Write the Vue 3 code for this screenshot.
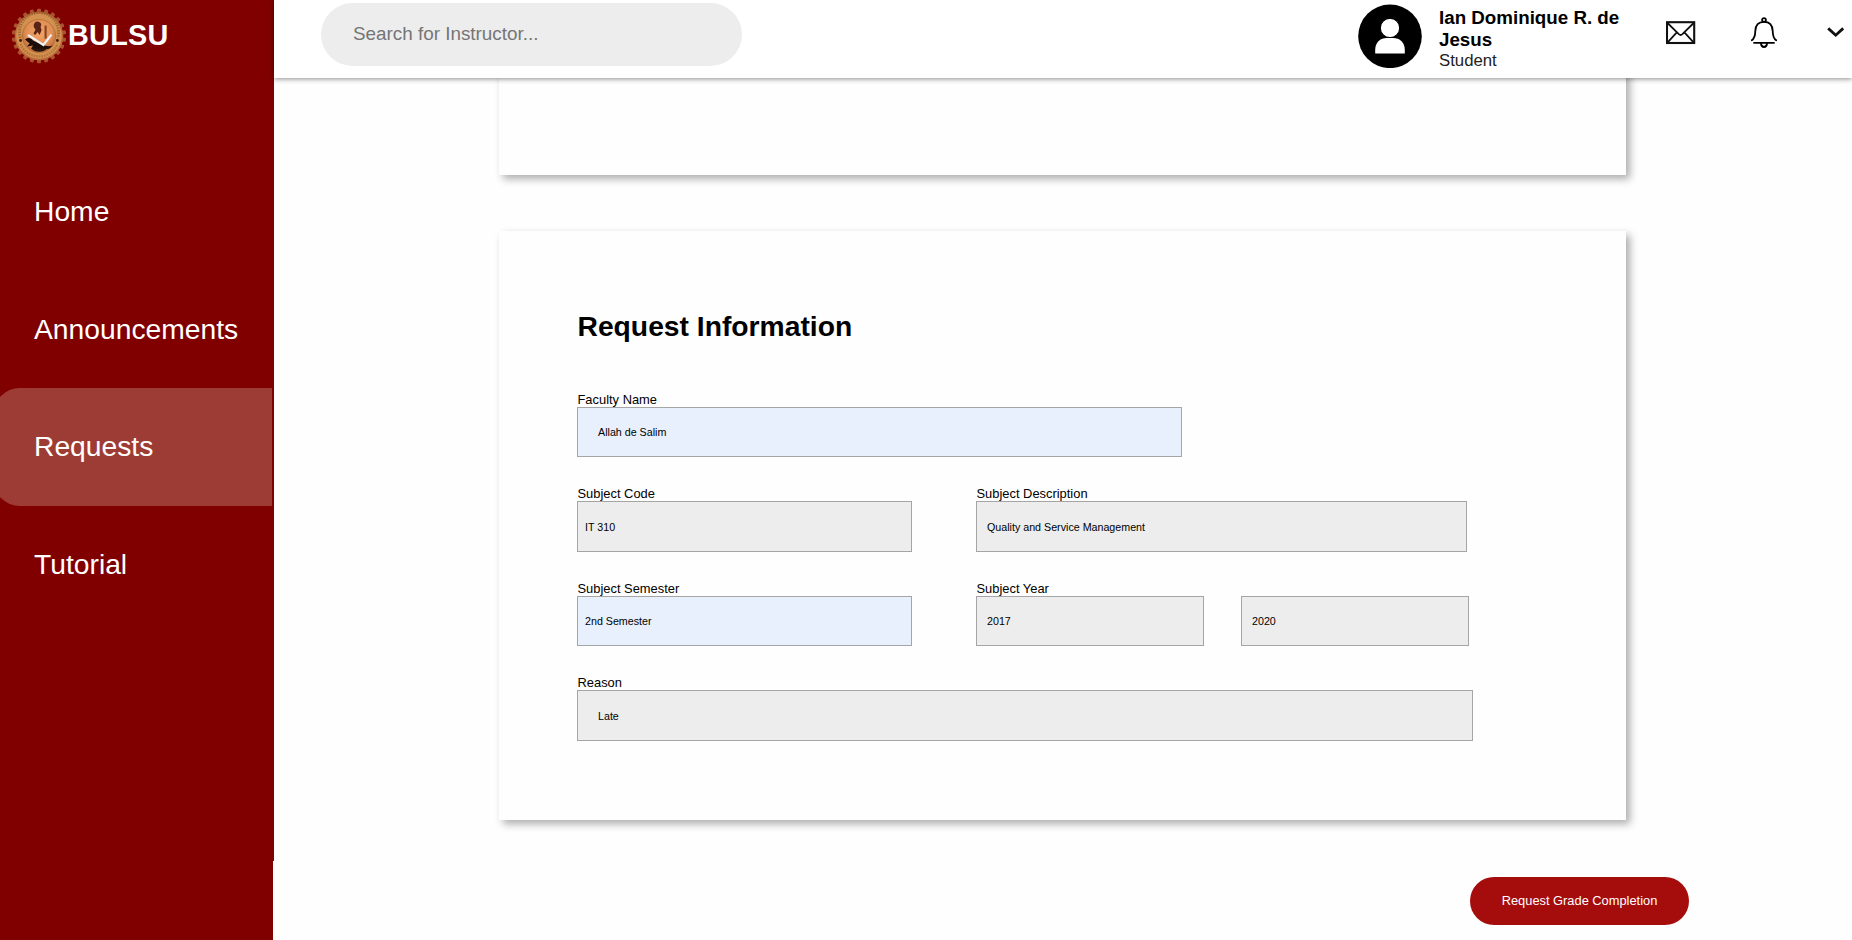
<script setup>
const navItems = [
  { label: 'Home', active: false },
  { label: 'Announcements', active: false },
  { label: 'Requests', active: true },
  { label: 'Tutorial', active: false },
]
const teeth = Array.from({ length: 22 }, (_, i) => (i * 360) / 22)
</script>

<template>
  <div class="page">
    <aside class="sidebar">
      <div class="brand">
        <svg class="seal" width="56" height="56" viewBox="0 0 56 56">
          <defs>
            <radialGradient id="sealFill" cx="0.5" cy="0.4" r="0.6">
              <stop offset="0" stop-color="#f3a566" />
              <stop offset="0.65" stop-color="#e08f55" />
              <stop offset="1" stop-color="#b9683a" />
            </radialGradient>
          </defs>
          <rect v-for="a in teeth" :key="a" x="26" y="0.8" width="4" height="6" rx="1" fill="#a9532f" :transform="`rotate(${a} 28 28)`" />
          <circle cx="28" cy="28" r="24.3" fill="#b8683a" />
          <circle cx="28" cy="28" r="22.8" fill="#d2914f" />
          <path d="M9.5 36 A20 20 0 0 0 46.5 36" fill="none" stroke="#b5743c" stroke-width="2.4" stroke-dasharray="1.6 1" />
          <path d="M9.3 30 A19.6 19.6 0 1 1 46.7 30" fill="none" stroke="#8f5c2c" stroke-width="3" stroke-dasharray="1.5 1.1" opacity="0.7" />
          <circle cx="28" cy="28" r="16.6" fill="url(#sealFill)" stroke="#a9652f" stroke-width="0.6" />
          <circle cx="9.6" cy="32.5" r="1.4" fill="#3d1b10" />
          <circle cx="46.4" cy="32.5" r="1.4" fill="#3d1b10" />
          <path d="M23 16 q2 -3.4 5 -2 q3.4 1.4 1.6 5 l1 3 l-2 5 l-2 -3 l-2.4 3 l-1.8 -1.4 l2.2 -4 q-2.8 -2.4 -1.6 -5.6z" fill="#5a2415" />
          <path d="M34.6 17.6 v13" stroke="#8a4522" stroke-width="2.2" />
          <path d="M14 31.4 q5 -3 8 1 l9 4 q6 3 11 1 l-4 3.4 q-10 2 -18 0 l2 -3.4 l-6 1 l2.6 -3z" fill="#1b0d08" />
          <path d="M20.6 40.6 h15 q-2 3.2 -7.4 3.2 t-7.6 -3.2z" fill="#29150f" />
          <path d="M17 27 L32.4 37 L40.4 26.6" fill="none" stroke="#eef0f2" stroke-width="2.2" />
        </svg>
        <span class="brand-name">BULSU</span>
      </div>
      <nav class="nav">
        <a v-for="item in navItems" :key="item.label" class="nav-item" :class="{ active: item.active }">{{ item.label }}</a>
      </nav>
    </aside>

    <div class="content">
      <header class="topbar">
        <div class="search">Search for Instructor...</div>
        <div class="profile">
          <svg class="avatar" width="64" height="64" viewBox="0 0 64 64">
            <circle cx="32" cy="32.3" r="31.8" fill="#000" />
            <path d="M17.2 49.4 V46 C17.2 38.5 22 34 29 34 H35 C42 34 46.8 38.5 46.8 46 V49.4 Z" fill="#fff" />
            <circle cx="32" cy="24" r="9.6" fill="#fff" stroke="#000" stroke-width="1" />
          </svg>
          <div class="who">
            <div class="who-name">Ian Dominique R. de Jesus</div>
            <div class="who-role">Student</div>
          </div>
        </div>
        <svg class="mail" width="30" height="24" viewBox="0 0 30 24" fill="none" stroke="#111" stroke-width="2.1">
          <rect x="1" y="1.2" width="27.2" height="20.8" />
          <path d="M1 1.5 L12.8 13.2 Q14.6 14.8 16.4 13.2 L28.2 1.5 M1.2 21.8 L10.8 11.4 M28 21.8 L18.4 11.4" stroke-width="1.8" />
        </svg>
        <svg class="bell" width="28" height="32" viewBox="0 0 28 32" fill="none" stroke="#000" stroke-width="1.8" stroke-linecap="round">
          <circle cx="14" cy="3" r="1.9" />
          <path d="M1.8 23.3 C4.8 21.4 5.2 18.5 5.3 14 C5.5 8.4 8.7 4.9 14 4.9 C19.3 4.9 22.5 8.4 22.7 14 C22.8 18.5 23.2 21.4 26.2 23.3" />
          <path d="M4 25.8 H24" />
          <path d="M11 26.4 C11.2 31.2 16.8 31.2 17 26.4" />
        </svg>
        <svg class="caret" width="18" height="11" viewBox="0 0 18 11" fill="none" stroke="#111" stroke-width="2.8">
          <path d="M1.2 1.4 L8.7 8.2 L16.2 1.4" />
        </svg>
      </header>

      <main class="main">
        <section class="card card-previous"></section>

        <section class="card card-request">
          <h2>Request Information</h2>
          <div class="row">
            <div class="field faculty">
              <label>Faculty Name</label>
              <div class="box filled wide-pad">Allah de Salim</div>
            </div>
          </div>
          <div class="row">
            <div class="field short">
              <label>Subject Code</label>
              <div class="box tall">IT 310</div>
            </div>
            <div class="field description">
              <label>Subject Description</label>
              <div class="box tall mid-pad">Quality and Service Management</div>
            </div>
          </div>
          <div class="row">
            <div class="field short">
              <label>Subject Semester</label>
              <div class="box filled">2nd Semester</div>
            </div>
            <div class="field year">
              <label>Subject Year</label>
              <div class="box mid-pad">2017</div>
            </div>
            <div class="field year year-end">
              <div class="box mid-pad">2020</div>
            </div>
          </div>
          <div class="row">
            <div class="field reason">
              <label>Reason</label>
              <div class="box tall wide-pad">Late</div>
            </div>
          </div>
        </section>

        <button class="submit" type="button">Request Grade Completion</button>
      </main>
    </div>
  </div>
</template>

<style>
html,
body {
  margin: 0;
  background: #fefefe;
}
</style>

<style scoped>
* {
  box-sizing: border-box;
}
.page {
  display: flex;
  width: 1852px;
  height: 940px;
  overflow: hidden;
  background: #fefefe;
  font-family: "Liberation Sans", Arial, sans-serif;
  color: #000;
}
.sidebar {
  flex: none;
  width: 274px;
  height: 940px;
  background:
    linear-gradient(#800000, #800000) 0 0 / 274px 861px no-repeat,
    linear-gradient(#800000, #800000) 0 0 / 273px 100% no-repeat;
  color: #fff;
}
.brand {
  display: flex;
  height: 153px;
  padding: 8px 0 0 11px;
}
.seal {
  flex: none;
}
.brand-name {
  margin: 11px 0 0 1px;
  font-size: 28.8px;
  line-height: 33px;
  font-weight: bold;
  letter-spacing: 0.3px;
}
.nav-item {
  display: flex;
  align-items: center;
  height: 117.5px;
  padding-left: 34px;
  font-size: 28.25px;
}
.nav-item.active {
  margin: 0 2px 0 -7px;
  padding-left: 41px;
  background: #9d3c34;
  border-radius: 27px 0 0 27px;
}
.content {
  flex: 1;
  min-width: 0;
}
.topbar {
  position: relative;
  z-index: 2;
  display: flex;
  align-items: flex-start;
  height: 78px;
  padding-left: 47px;
  background: #fff;
  box-shadow: 0 1px 5px rgba(0, 0, 0, 0.45);
}
.search {
  width: 421px;
  height: 63px;
  margin-top: 3px;
  padding-left: 32px;
  border-radius: 32px;
  background: #ededed;
  color: #757575;
  font-size: 18.85px;
  line-height: 61px;
}
.profile {
  display: flex;
  width: 308px;
  margin: 4px 0 0 616px;
}
.avatar {
  flex: none;
}
.who {
  width: 190px;
  margin: 3px 0 0 17px;
}
.who-name {
  font-size: 18.75px;
  line-height: 22px;
  font-weight: bold;
}
.who-role {
  font-size: 16.75px;
  line-height: 20px;
  color: #222;
}
.mail {
  margin: 21px 0 0 0;
  flex: none;
}
.bell {
  margin: 17px 0 0 54px;
  flex: none;
}
.caret {
  margin: 27px 0 0 49px;
  flex: none;
}
.main {
  display: flex;
  flex-direction: column;
  padding-left: 225px;
}
.card {
  width: 1127px;
  background: #fefefe;
  box-shadow: 4px 4px 8px rgba(0, 0, 0, 0.32);
}
.card-previous {
  height: 117px;
  margin-top: -20px;
}
.card-request {
  display: flex;
  flex-direction: column;
  gap: 29px;
  height: 589px;
  margin-top: 56px;
  padding: 79px 0 0 78px;
}
h2 {
  margin: 0 0 21px;
  padding-left: 0.5px;
  font-size: 28.25px;
  line-height: 32px;
  font-weight: bold;
}
.row {
  display: flex;
  align-items: flex-end;
}
label {
  display: block;
  padding-left: 0.5px;
  font-size: 12.9px;
  line-height: 15px;
}
.box {
  display: flex;
  align-items: center;
  height: 50px;
  padding-left: 7px;
  border: 1px solid #a5a5a5;
  background: #ededed;
  font-size: 10.7px;
  line-height: 12px;
}
.box.tall {
  height: 51px;
  padding-top: 1px;
}
.box.filled {
  background: #e8effd;
}
.box.mid-pad {
  padding-left: 10px;
}
.box.wide-pad {
  padding-left: 20px;
}
.faculty {
  width: 605px;
}
.short {
  width: 335px;
  margin-right: 64px;
}
.description {
  width: 491px;
}
.year {
  width: 228px;
}
.year-end {
  margin-left: 37px;
}
.reason {
  width: 896px;
}
.submit {
  width: 219px;
  height: 48px;
  margin: 57px 0 0 971px;
  padding: 0 0 2px;
  border: 0;
  border-radius: 24px;
  background: #a50c0c;
  color: #fff;
  font-family: inherit;
  font-size: 12.85px;
}
</style>
